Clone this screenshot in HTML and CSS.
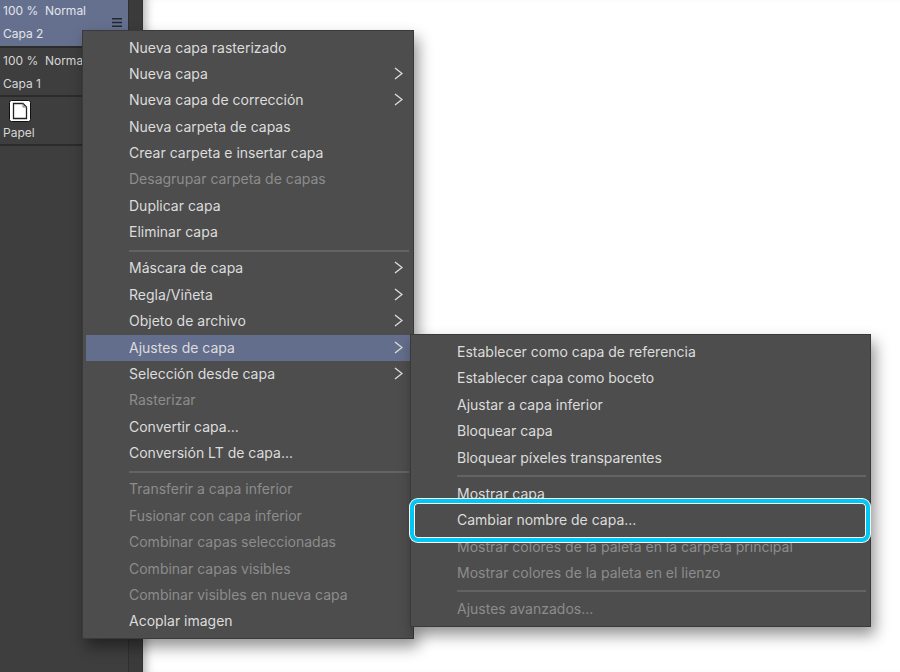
FILE: index.html
```html
<!DOCTYPE html>
<html lang="es">
<head>
<meta charset="utf-8">
<title>Capas</title>
<link rel="stylesheet" href="styles.css">
</head>
<body>
<div class="app">
  <aside class="panel">
    <div class="layers">
      <div class="layer selected">
        <div class="layer-line">100 %&nbsp; Normal</div>
        <div class="layer-line">Capa 2</div>
        <svg class="layer-menu" width="10" height="9" viewBox="0 0 10 9"><path d="M0 .75h10M0 4.5h10M0 8.25h10" stroke="#23272f" stroke-width="1.3"/></svg>
      </div>
      <div class="layer">
        <div class="layer-line">100 %&nbsp; Normal</div>
        <div class="layer-line">Capa 1</div>
      </div>
      <div class="layer paper">
        <div class="thumb">
          <svg width="22" height="22" viewBox="0 0 22 22"><rect x=".5" y=".5" width="21" height="21" rx="2" fill="#fff" stroke="#111"/><path d="M4.5 3.5h9.5l3.5 3.5v11.5h-13z" fill="#fff" stroke="#222" stroke-width="1.3"/><path d="M14 3.5v3.5h3.5" fill="none" stroke="#777"/></svg>
        </div>
        <div class="layer-line">Papel</div>
      </div>
    </div>
    <div class="strip"></div>
  </aside>
  <main class="canvas"></main>
</div>

<nav class="menu main-menu">
  <div class="item">Nueva capa rasterizado</div>
  <div class="item sub">Nueva capa<svg class="chev" width="9" height="13" viewBox="0 0 9 13"><path d="M1 1l7 5.5-7 5.5" fill="none" stroke="#dcdcdc" stroke-width="1.4"/></svg></div>
  <div class="item sub">Nueva capa de corrección<svg class="chev" width="9" height="13" viewBox="0 0 9 13"><path d="M1 1l7 5.5-7 5.5" fill="none" stroke="#dcdcdc" stroke-width="1.4"/></svg></div>
  <div class="item">Nueva carpeta de capas</div>
  <div class="item">Crear carpeta e insertar capa</div>
  <div class="item off">Desagrupar carpeta de capas</div>
  <div class="item">Duplicar capa</div>
  <div class="item">Eliminar capa</div>
  <div class="sep"></div>
  <div class="item sub">Máscara de capa<svg class="chev" width="9" height="13" viewBox="0 0 9 13"><path d="M1 1l7 5.5-7 5.5" fill="none" stroke="#dcdcdc" stroke-width="1.4"/></svg></div>
  <div class="item sub">Regla/Viñeta<svg class="chev" width="9" height="13" viewBox="0 0 9 13"><path d="M1 1l7 5.5-7 5.5" fill="none" stroke="#dcdcdc" stroke-width="1.4"/></svg></div>
  <div class="item sub">Objeto de archivo<svg class="chev" width="9" height="13" viewBox="0 0 9 13"><path d="M1 1l7 5.5-7 5.5" fill="none" stroke="#dcdcdc" stroke-width="1.4"/></svg></div>
  <div class="item sub active">Ajustes de capa<svg class="chev" width="9" height="13" viewBox="0 0 9 13"><path d="M1 1l7 5.5-7 5.5" fill="none" stroke="#dcdcdc" stroke-width="1.4"/></svg></div>
  <div class="item sub">Selección desde capa<svg class="chev" width="9" height="13" viewBox="0 0 9 13"><path d="M1 1l7 5.5-7 5.5" fill="none" stroke="#dcdcdc" stroke-width="1.4"/></svg></div>
  <div class="item off">Rasterizar</div>
  <div class="item">Convertir capa...</div>
  <div class="item">Conversión LT de capa...</div>
  <div class="sep"></div>
  <div class="item off">Transferir a capa inferior</div>
  <div class="item off">Fusionar con capa inferior</div>
  <div class="item off">Combinar capas seleccionadas</div>
  <div class="item off">Combinar capas visibles</div>
  <div class="item off">Combinar visibles en nueva capa</div>
  <div class="item">Acoplar imagen</div>
</nav>

<nav class="menu sub-menu">
  <div class="item">Establecer como capa de referencia</div>
  <div class="item">Establecer capa como boceto</div>
  <div class="item">Ajustar a capa inferior</div>
  <div class="item">Bloquear capa</div>
  <div class="item">Bloquear píxeles transparentes</div>
  <div class="sep"></div>
  <div class="item">Mostrar capa</div>
  <div class="item over">Cambiar nombre de capa...</div>
  <div class="item off">Mostrar colores de la paleta en la carpeta principal</div>
  <div class="item off">Mostrar colores de la paleta en el lienzo</div>
  <div class="sep"></div>
  <div class="item off">Ajustes avanzados...</div>
</nav>

<div class="callout"></div>
</body>
</html>
```

FILE: styles.css
```css
* { box-sizing: border-box; }
html, body { margin: 0; height: 100%; overflow: hidden; }
body {
  background: #fff;
  font-family: Inter, "Noto Sans", sans-serif;
  color: #e0e0e0;
}
.app { display: flex; height: 672px; }
.panel { display: flex; width: 143px; flex: none; background: #3e3e3e; }
.layers { width: 128px; flex: none; background: #3e3e3e; }
.strip { flex: 1; background: #3b3b3b; border-left: 1px solid #303030; box-shadow: inset -1px 0 0 #333; }
.canvas {
  flex: 1;
  background: #fff;
  box-shadow: inset 10px 0 10px -7px rgba(0, 0, 0, .3);
}
.layer {
  position: relative;
  height: 49px;
  padding: 2px 3px 0;
  border-bottom: 2px solid #2b2b2b;
  font-size: 12px;
  color: #d6d6d6;
}
.layer.selected { height: 48px; padding-top: 0; background: #65708f; color: #e2e4ea; }
.layer-line { height: 22.5px; line-height: 22.5px; white-space: nowrap; }
.layer.paper { height: 49px; padding-top: 3px; }
.layer.paper .layer-line { height: 20px; line-height: 20px; }
.thumb { height: 23px; margin-left: 6px; display: flex; }
.layer-menu { position: absolute; right: 6px; top: 18px; }
.menu {
  position: absolute;
  background: #4d4d4d;
  border: 1px solid #3a3a3a;
  box-shadow: 4px 8px 14px rgba(0, 0, 0, .42);
  padding: 3.8px 3px;
}
.main-menu { left: 82px; top: 30px; width: 332px; height: 609px; padding-top: 3.5px; }
.sub-menu { left: 410px; top: 334px; width: 461px; height: 293px; padding-top: 4px; }
.item {
  position: relative;
  height: 26.4px;
  line-height: 26px;
  padding-left: 43px;
  font-size: 14px;
  white-space: nowrap;
  color: #dcdcdc;
}
.item.over { z-index: 2; }
.item.off { color: #8c8c8c; }
.item.active { background: #636e8c; }
.chev { position: absolute; right: 7px; top: 6px; }
.sep { height: 2px; margin: 4px 1px 3.8px 43px; background: #636363; }
.callout {
  position: absolute;
  z-index: 1;
  left: 410px;
  top: 499px;
  width: 460px;
  height: 43px;
  border: 4px solid #00c8f5;
  border-radius: 8px;
  background: #4d4d4d;
  box-shadow: 0 0 0 1px #fff, inset 0 0 0 1px #fff;
}
```
